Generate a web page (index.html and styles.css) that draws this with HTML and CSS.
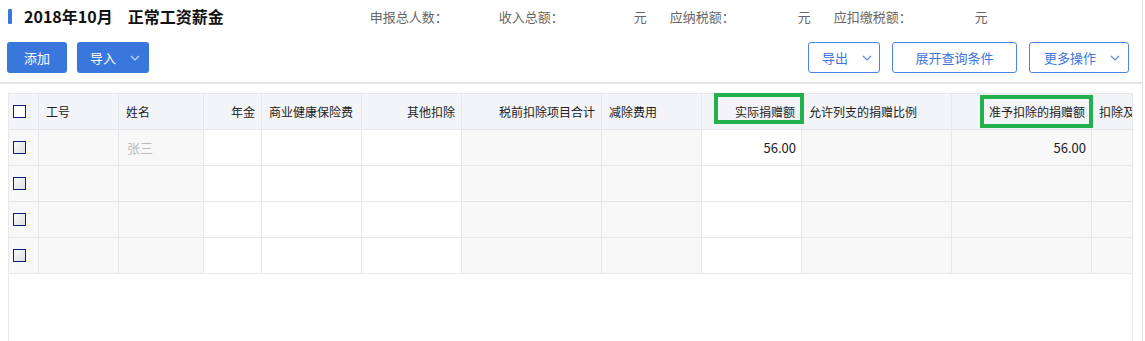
FILE: index.html
```html
<!DOCTYPE html>
<html lang="zh-CN">

<head>
    <meta charset="UTF-8">
    <title>正常工资薪金</title>
    <link rel="stylesheet" href="styles.css">
</head>

<body>
    <div class="page">
        <div class="top">
            <div class="title-row">
                <span class="title-bar"></span>
                <span class="title-month">2018年10月</span>
                <span class="title-name">正常工资薪金</span>
                <div class="stats">
                    <span class="stat stat-people"><span class="stat-label">申报总人数：</span></span>
                    <span class="stat"><span class="stat-label">收入总额：</span><span class="stat-val stat-wide">元</span></span>
                    <span class="stat"><span class="stat-label">应纳税额：</span><span class="stat-val">元</span></span>
                    <span class="stat"><span class="stat-label">应扣缴税额：</span><span class="stat-val">元</span></span>
                </div>
            </div>

            <div class="toolbar">
                <div class="btn btn-primary btn-add">添加</div>
                <div class="btn btn-primary btn-drop">导入
                    <svg class="chev" width="10" height="6" viewBox="0 0 10 6"><polyline points="1,1 5,5 9,1" /></svg>
                </div>

                <div class="toolbar-right">
                    <div class="btn btn-line btn-drop">导出
                        <svg class="chev" width="10" height="6" viewBox="0 0 10 6"><polyline points="1,1 5,5 9,1" /></svg>
                    </div>
                    <div class="btn btn-line btn-query">展开查询条件</div>
                    <div class="btn btn-line btn-drop btn-more">更多操作
                        <svg class="chev" width="10" height="6" viewBox="0 0 10 6"><polyline points="1,1 5,5 9,1" /></svg>
                    </div>
                </div>
            </div>
        </div>

        <div class="grid-wrap">
            <table class="grid">
                <colgroup>
                    <col style="width:30px">
                    <col style="width:80px">
                    <col style="width:85px">
                    <col style="width:58px">
                    <col style="width:100px">
                    <col style="width:100px">
                    <col style="width:140px">
                    <col style="width:100px">
                    <col style="width:100px">
                    <col style="width:150px">
                    <col style="width:140px">
                    <col style="width:40px">
                </colgroup>
                <thead>
                    <tr>
                        <th class="chk-cell"><span class="chk chk-head"></span></th>
                        <th>工号</th>
                        <th>姓名</th>
                        <th class="r">年金</th>
                        <th>商业健康保险费</th>
                        <th class="r">其他扣除</th>
                        <th class="r">税前扣除项目合计</th>
                        <th>减除费用</th>
                        <th class="r mark-cell">实际捐赠额<span class="mark mark-one"></span></th>
                        <th>允许列支的捐赠比例</th>
                        <th class="r mark-cell">准予扣除的捐赠额<span class="mark mark-two"></span></th>
                        <th class="last">扣除及</th>
                    </tr>
                </thead>
                <tbody>
                    <tr>
                        <td class="chk-cell"><span class="chk"></span></td>
                        <td class="ro"></td>
                        <td class="ro name">张三</td>
                        <td></td>
                        <td></td>
                        <td></td>
                        <td class="ro"></td>
                        <td class="ro"></td>
                        <td class="r">56.00</td>
                        <td class="ro"></td>
                        <td class="ro r">56.00</td>
                        <td class="ro last"></td>
                    </tr>
                    <tr>
                        <td class="chk-cell"><span class="chk"></span></td>
                        <td class="ro"></td>
                        <td class="ro"></td>
                        <td></td>
                        <td></td>
                        <td></td>
                        <td class="ro"></td>
                        <td class="ro"></td>
                        <td></td>
                        <td class="ro"></td>
                        <td class="ro"></td>
                        <td class="ro last"></td>
                    </tr>
                    <tr>
                        <td class="chk-cell"><span class="chk"></span></td>
                        <td class="ro"></td>
                        <td class="ro"></td>
                        <td></td>
                        <td></td>
                        <td></td>
                        <td class="ro"></td>
                        <td class="ro"></td>
                        <td></td>
                        <td class="ro"></td>
                        <td class="ro"></td>
                        <td class="ro last"></td>
                    </tr>
                    <tr>
                        <td class="chk-cell"><span class="chk"></span></td>
                        <td class="ro"></td>
                        <td class="ro"></td>
                        <td></td>
                        <td></td>
                        <td></td>
                        <td class="ro"></td>
                        <td class="ro"></td>
                        <td></td>
                        <td class="ro"></td>
                        <td class="ro"></td>
                        <td class="ro last"></td>
                    </tr>
                </tbody>
            </table>
        </div>
    </div>
</body>

</html>
```

FILE: styles.css
```css
body {
    margin: 0;
    font-family: "Noto Sans CJK SC", "Noto Sans", sans-serif;
    color: #333;
    background-color: #fff;
}

.page {
    width: 1142px;
    height: 100vh;
    border-right: 1px solid #e3e3e3;
    display: flex;
    flex-direction: column;
}

.top {
    padding: 9px 13px 9px 7px;
    border-bottom: 2px solid #e4e4e4;
}

.title-row {
    display: flex;
    align-items: center;
    height: 15px;
}

.title-bar {
    width: 4px;
    height: 15px;
    margin-left: 1px;
    border-radius: 1px;
    background-color: #3a78e0;
}

.title-month,
.title-name {
    font-size: 16px;
    font-weight: 700;
    color: #111;
    line-height: 15px;
}

.title-month {
    margin-left: 12px;
}

.title-name {
    margin-left: 15px;
}

.stats {
    display: flex;
    margin-left: 146px;
    font-size: 13px;
    color: #666;
    line-height: 15px;
}

.stat {
    display: flex;
    margin-right: 23px;
}

.stat-people {
    width: 106px;
}

.stat-val {
    width: 76px;
    text-align: right;
}

.stat-wide {
    width: 83px;
}

.toolbar {
    display: flex;
    margin-top: 18px;
}

.toolbar-right {
    display: flex;
    gap: 12px;
    margin-left: auto;
}

.btn {
    height: 31px;
    box-sizing: border-box;
    display: flex;
    align-items: center;
    justify-content: center;
    font-size: 13px;
    border-radius: 3px;
    cursor: pointer;
}

.btn-primary {
    background-color: #3a77dc;
    color: #fff;
}

.btn-add {
    width: 60px;
}

.btn-primary.btn-drop {
    margin-left: 10px;
    width: 72px;
}

.btn-drop {
    justify-content: flex-start;
    padding-left: 13px;
}

.btn-drop .chev {
    margin-left: 14px;
}

.btn-line {
    border: 1px solid #4a84e6;
    color: #3f76dc;
}

.btn-line.btn-drop {
    width: 72px;
}

.btn-query {
    width: 125px;
}

.btn-line.btn-more {
    width: 100px;
    padding-left: 14px;
}

.chev polyline {
    fill: none;
    stroke: #c9dbff;
    stroke-width: 1.2;
}

.btn-line .chev polyline {
    stroke: #5b8be6;
}

.grid-wrap {
    flex: 1;
    margin: 9px 9px 0 8px;
    border-left: 1px solid #e8e8ea;
    border-right: 1px solid #e8e8ea;
}

.grid {
    width: 1123px;
    table-layout: fixed;
    border-collapse: separate;
    border-spacing: 0;
    border-top: 1px solid #e8e8ea;
}

.grid tr {
    height: 36px;
}

.grid th,
.grid td {
    box-sizing: border-box;
    height: 36px;
    padding: 0 7px;
    border-right: 1px solid #e6e7eb;
    border-bottom: 1px solid #e6e7eb;
    text-align: left;
    white-space: nowrap;
    overflow: hidden;
}

.grid th {
    font-size: 12px;
    font-weight: 400;
    color: #222;
    background-color: #f3f4f8;
}

.grid td {
    font-size: 13px;
    color: #222;
}

.grid .r {
    text-align: right;
    padding-right: 6px;
}

.grid td.r {
    padding-right: 5px;
}

.grid .last {
    border-right: none;
}

.grid td.ro {
    background-color: #f8f8f8;
}

.grid td.name {
    color: #bdbdbd;
    padding-left: 8px;
}

.grid .chk-cell {
    padding: 0 0 0 4px;
}

.grid td.chk-cell {
    background-color: #f8f8f8;
}

.chk {
    display: block;
    width: 13px;
    height: 13px;
    box-sizing: border-box;
    border: 1.5px solid #0f1c78;
    background: linear-gradient(135deg, #fafafa, #dedede);
}

.chk-head {
    background: #fff;
}

.mark-cell {
    position: relative;
    overflow: visible !important;
}

.mark {
    position: absolute;
    box-sizing: border-box;
    border: 4px solid #22b14c;
    z-index: 2;
}

.mark-one {
    left: 12px;
    top: -1px;
    width: 90px;
    height: 31px;
}

.mark-two {
    left: 28px;
    top: 1px;
    width: 113px;
    height: 33px;
}
```
